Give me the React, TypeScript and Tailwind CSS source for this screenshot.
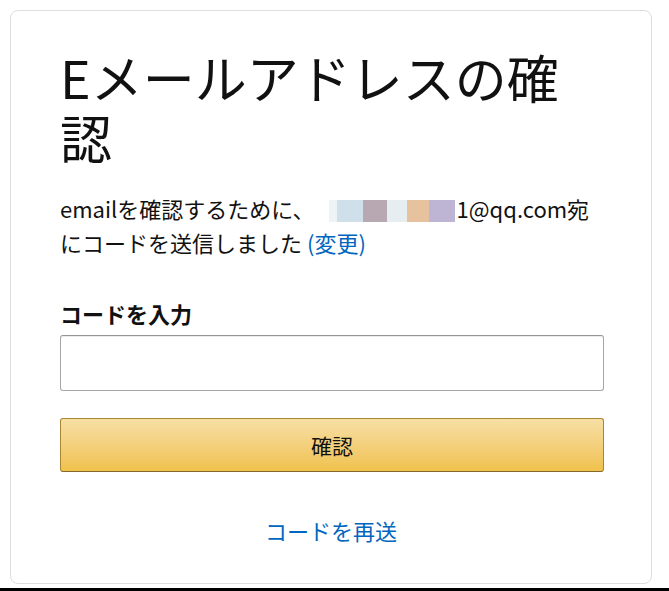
const FONT = "font-['Noto_Sans_CJK_JP','Noto_Sans',sans-serif]";

function BlurredAddress() {
  // the screenshot has the address pixelated; keep that as colour blocks
  const blocks = [
    "w-[8px] bg-[#eef3f6]",
    "w-[26px] bg-[#cfe0ea]",
    "w-[24px] bg-[#b8a8b2]",
    "w-[20px] bg-[#e7eef2]",
    "w-[22px] bg-[#e6c29f]",
    "w-[26px] bg-[#bdb5d3]",
  ];
  return (
    <span className="ml-[14px] mr-[2px] inline-flex h-[22px] align-[-4px]">
      {blocks.map((b, i) => (
        <span key={i} className={`inline-block h-full ${b}`} />
      ))}
    </span>
  );
}

export default function App() {
  return (
    <div className={`flex h-[591px] w-[669px] flex-col bg-white ${FONT}`}>
      <div className="pl-[10px] pt-[10px]">
        <div className="h-[574px] w-[642px] rounded-[8px] border border-[#dddddd] px-[49px] pt-[36px]">
          <h1 className="text-[52px] font-normal leading-[60px] text-[#111111]">
            Eメールアドレスの確
            <br />認
          </h1>
          <p className="mt-[24px] text-[22px] leading-[34px] text-[#111111]">
            emailを確認するために、
            <BlurredAddress />
            1@qq.com宛
            <br />
            にコードを送信しました{" "}
            <a className="text-[#0066c0]">(変更)</a>
          </p>
          <label className="mt-[39px] block text-[22px] font-bold leading-[30px] text-[#111111]">
            コードを入力
          </label>
          <input
            type="text"
            className="mt-[7px] block h-[56px] w-[544px] rounded-[3px] border border-[#a6a6a6] border-t-[#949494] bg-white shadow-[inset_0_1px_0_rgba(0,0,0,0.07)] outline-none"
          />
          <button className="mt-[27px] flex h-[54px] w-[544px] items-center justify-center rounded-[3px] border border-[#a88734] border-b-[#846a29] bg-gradient-to-b from-[#f7dfa5] to-[#f0c14b] text-[21px] leading-[30px] text-[#111111]">
            確認
          </button>
          <div className="mt-[43px] text-center text-[22px] leading-[30px] text-[#0066c0]">
            コードを再送
          </div>
        </div>
      </div>
      <div className="mt-auto h-[3px] w-full bg-black" />
    </div>
  );
}
